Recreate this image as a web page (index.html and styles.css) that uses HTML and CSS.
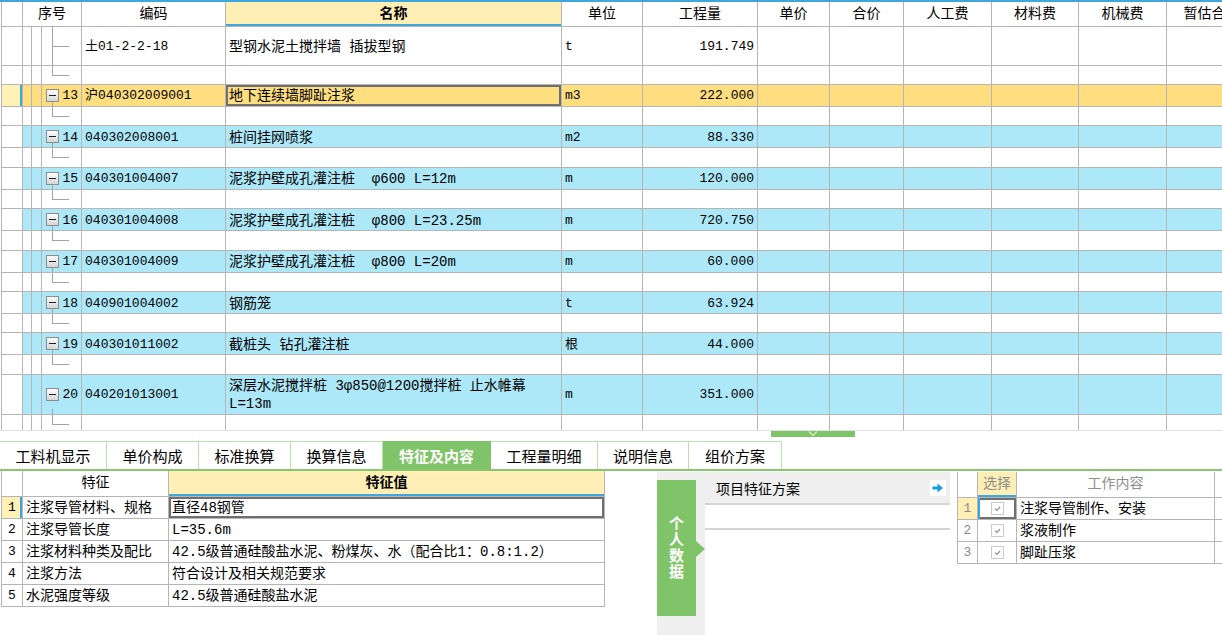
FILE: index.html
```html
<!DOCTYPE html>
<html lang="zh-CN">
<head>
    <meta charset="UTF-8">
    <title>分部分项</title>
    <link rel="stylesheet" href="styles.css">
</head>
<body>
    <div class="grid-wrap">
        <table class="grid">
            <colgroup>
                <col style="width:21px"><col style="width:9px"><col style="width:10px"><col style="width:40px">
                <col style="width:144px"><col style="width:336px"><col style="width:81px"><col style="width:115px">
                <col style="width:72px"><col style="width:74px"><col style="width:88px"><col style="width:87px">
                <col style="width:88px"><col style="width:90px">
            </colgroup>
            <tr class="head">
                <th></th><th colspan="3">序号</th><th>编码</th><th class="hl">名称</th><th>单位</th><th>工程量</th>
                <th>单价</th><th>合价</th><th>人工费</th><th>材料费</th><th>机械费</th><th>暂估合价</th>
            </tr>
            <tr class="leaf-row">
                <td class="sel"></td><td></td><td></td><td class="no leaf"></td>
                <td class="code">土01-2-2-18</td><td class="name">型钢水泥土搅拌墙 插拔型钢</td><td class="unit">t</td><td class="qty">191.749</td>
                <td></td><td></td><td></td><td></td><td></td><td></td>
            </tr>
            <tr class="gap"><td class="sel"></td><td></td><td></td><td class="no"></td><td></td><td></td><td></td><td></td><td></td><td></td><td></td><td></td><td></td><td></td></tr>

            <tr class="item cur">
                <td class="sel"></td><td></td><td></td><td class="no"><div class="nob"><span class="fold"></span>13</div></td>
                <td class="code">沪040302009001</td><td class="name focus">地下连续墙脚趾注浆</td><td class="unit">m3</td><td class="qty">222.000</td>
                <td></td><td></td><td></td><td></td><td></td><td></td>
            </tr>
            <tr class="gap"><td class="sel"></td><td></td><td></td><td class="no"></td><td></td><td></td><td></td><td></td><td></td><td></td><td></td><td></td><td></td><td></td></tr>

            <tr class="item blue">
                <td class="sel"></td><td></td><td></td><td class="no"><div class="nob"><span class="fold"></span>14</div></td>
                <td class="code">040302008001</td><td class="name">桩间挂网喷浆</td><td class="unit">m2</td><td class="qty">88.330</td>
                <td></td><td></td><td></td><td></td><td></td><td></td>
            </tr>
            <tr class="gap"><td class="sel"></td><td></td><td></td><td class="no"></td><td></td><td></td><td></td><td></td><td></td><td></td><td></td><td></td><td></td><td></td></tr>

            <tr class="item blue">
                <td class="sel"></td><td></td><td></td><td class="no"><div class="nob"><span class="fold"></span>15</div></td>
                <td class="code">040301004007</td><td class="name">泥浆护壁成孔灌注桩&nbsp;&nbsp;φ600 L=12m</td><td class="unit">m</td><td class="qty">120.000</td>
                <td></td><td></td><td></td><td></td><td></td><td></td>
            </tr>
            <tr class="gap"><td class="sel"></td><td></td><td></td><td class="no"></td><td></td><td></td><td></td><td></td><td></td><td></td><td></td><td></td><td></td><td></td></tr>

            <tr class="item blue">
                <td class="sel"></td><td></td><td></td><td class="no"><div class="nob"><span class="fold"></span>16</div></td>
                <td class="code">040301004008</td><td class="name">泥浆护壁成孔灌注桩&nbsp;&nbsp;φ800 L=23.25m</td><td class="unit">m</td><td class="qty">720.750</td>
                <td></td><td></td><td></td><td></td><td></td><td></td>
            </tr>
            <tr class="gap"><td class="sel"></td><td></td><td></td><td class="no"></td><td></td><td></td><td></td><td></td><td></td><td></td><td></td><td></td><td></td><td></td></tr>

            <tr class="item blue">
                <td class="sel"></td><td></td><td></td><td class="no"><div class="nob"><span class="fold"></span>17</div></td>
                <td class="code">040301004009</td><td class="name">泥浆护壁成孔灌注桩&nbsp;&nbsp;φ800 L=20m</td><td class="unit">m</td><td class="qty">60.000</td>
                <td></td><td></td><td></td><td></td><td></td><td></td>
            </tr>
            <tr class="gap"><td class="sel"></td><td></td><td></td><td class="no"></td><td></td><td></td><td></td><td></td><td></td><td></td><td></td><td></td><td></td><td></td></tr>

            <tr class="item blue">
                <td class="sel"></td><td></td><td></td><td class="no"><div class="nob"><span class="fold"></span>18</div></td>
                <td class="code">040901004002</td><td class="name">钢筋笼</td><td class="unit">t</td><td class="qty">63.924</td>
                <td></td><td></td><td></td><td></td><td></td><td></td>
            </tr>
            <tr class="gap"><td class="sel"></td><td></td><td></td><td class="no"></td><td></td><td></td><td></td><td></td><td></td><td></td><td></td><td></td><td></td><td></td></tr>

            <tr class="item blue">
                <td class="sel"></td><td></td><td></td><td class="no"><div class="nob"><span class="fold"></span>19</div></td>
                <td class="code">040301011002</td><td class="name">截桩头 钻孔灌注桩</td><td class="unit">根</td><td class="qty">44.000</td>
                <td></td><td></td><td></td><td></td><td></td><td></td>
            </tr>
            <tr class="gap"><td class="sel"></td><td></td><td></td><td class="no"></td><td></td><td></td><td></td><td></td><td></td><td></td><td></td><td></td><td></td><td></td></tr>

            <tr class="item blue tall">
                <td class="sel"></td><td></td><td></td><td class="no"><div class="nob"><span class="fold"></span>20</div></td>
                <td class="code">040201013001</td><td class="name">深层水泥搅拌桩 3φ850@1200搅拌桩 止水帷幕<br>L=13m</td><td class="unit">m</td><td class="qty">351.000</td>
                <td></td><td></td><td></td><td></td><td></td><td></td>
            </tr>
            <tr class="gap"><td class="sel"></td><td></td><td></td><td class="no"></td><td></td><td></td><td></td><td></td><td></td><td></td><td></td><td></td><td></td><td></td></tr>
        </table>
    </div>

    <div class="splitter">
        <div class="handle">
            <svg width="10" height="6" viewBox="0 0 10 6"><path d="M1 0.5l4 4 4-4" fill="none" stroke="#d4efc9" stroke-width="1.2"/></svg>
        </div>
    </div>

    <div class="tabs">
        <div class="tab" style="width:107px">工料机显示</div>
        <div class="tab" style="width:92px">单价构成</div>
        <div class="tab" style="width:92px">标准换算</div>
        <div class="tab" style="width:92px">换算信息</div>
        <div class="tab active" style="width:108px">特征及内容</div>
        <div class="tab" style="width:107px">工程量明细</div>
        <div class="tab" style="width:91px">说明信息</div>
        <div class="tab" style="width:93px">组价方案</div>
    </div>

    <div class="bottom">
        <div class="feat-area">
            <table class="feat">
                <colgroup>
                    <col style="width:21px"><col style="width:146px"><col style="width:436px">
                </colgroup>
                <tr>
                    <th></th><th>特征</th><th class="hl">特征值</th>
                </tr>
                <tr class="cur">
                    <td class="rn">1</td><td>注浆导管材料、规格</td><td class="focus">直径48钢管</td>
                </tr>
                <tr>
                    <td class="rn">2</td><td>注浆导管长度</td><td>L=35.6m</td>
                </tr>
                <tr>
                    <td class="rn">3</td><td>注浆材料种类及配比</td><td>42.5级普通硅酸盐水泥、粉煤灰、水（配合比1：0.8:1.2）</td>
                </tr>
                <tr>
                    <td class="rn">4</td><td>注浆方法</td><td>符合设计及相关规范要求</td>
                </tr>
                <tr>
                    <td class="rn">5</td><td>水泥强度等级</td><td>42.5级普通硅酸盐水泥</td>
                </tr>
            </table>
        </div>

        <div class="mid">
            <div class="side">
                <div class="vtab">个人数据</div>
                <div class="tri"></div>
            </div>
            <div class="plan">
                <div class="plan-head">
                    <span>项目特征方案</span>
                    <svg class="go" width="16" height="16" viewBox="0 0 16 16"><rect width="16" height="16" fill="#fff"/><path d="M2.5 6.5h5V3.5L13 8l-5.5 4.5v-3h-5z" fill="#1a9ed9"/></svg>
                </div>
                <div class="plan-row"></div>
            </div>
        </div>

        <table class="work">
            <colgroup>
                <col style="width:20px"><col style="width:39px"><col style="width:198px"><col style="width:40px">
            </colgroup>
            <tr>
                <th></th><th class="hl">选择</th><th>工作内容</th><th></th>
            </tr>
            <tr class="cur">
                <td class="rn">1</td>
                <td class="chk focus"><svg width="13" height="13" viewBox="0 0 13 13"><rect x="0.5" y="0.5" width="12" height="12" fill="#fff" stroke="#cbcbcb"/><path d="M4 6.6l1.9 1.8 3.2-3.4" fill="none" stroke="#8c8c8c" stroke-width="1.1"/></svg></td>
                <td>注浆导管制作、安装</td><td></td>
            </tr>
            <tr>
                <td class="rn">2</td>
                <td class="chk"><svg width="13" height="13" viewBox="0 0 13 13"><rect x="0.5" y="0.5" width="12" height="12" fill="#fff" stroke="#cbcbcb"/><path d="M4 6.6l1.9 1.8 3.2-3.4" fill="none" stroke="#8c8c8c" stroke-width="1.1"/></svg></td>
                <td>浆液制作</td><td></td>
            </tr>
            <tr>
                <td class="rn">3</td>
                <td class="chk"><svg width="13" height="13" viewBox="0 0 13 13"><rect x="0.5" y="0.5" width="12" height="12" fill="#fff" stroke="#cbcbcb"/><path d="M4 6.6l1.9 1.8 3.2-3.4" fill="none" stroke="#8c8c8c" stroke-width="1.1"/></svg></td>
                <td>脚趾压浆</td><td></td>
            </tr>
        </table>
    </div>
</body>
</html>
```

FILE: styles.css
```css
* {
    box-sizing: border-box;
}
body {
    margin: 0;
    width: 1222px;
    height: 635px;
    overflow: hidden;
    background-color: #fff;
    font-family: "Liberation Mono", "Noto Sans CJK SC", monospace;
    font-size: 13px;
    color: #000;
}

/* top grid */
.grid-wrap {
    height: 431px;
    overflow: hidden;
    border-top: 2px solid #3ea7dd;
    border-bottom: 1px solid #e2e2e2;
    padding-left: 1px;
}
.grid {
    border-collapse: collapse;
    table-layout: fixed;
    width: 1255px;
}
.grid th,
.grid td {
    border: 1px solid #b5b5b5;
    padding: 0 3px;
    white-space: nowrap;
    overflow: hidden;
    line-height: 18px;
}
.grid th {
    border-top: 0;
    height: 24px;
    font-size: 14px;
    font-weight: normal;
}
.grid th.hl,
.feat th.hl,
.work th.hl {
    background-color: #ffefb5;
    font-weight: bold;
    box-shadow: inset 0 -2px #3ea7dd;
}
.grid td.sel {
    padding: 0;
}
.grid td.no {
    padding: 0 3px 0 4px;
}
.grid .leaf-row td {
    height: 39px;
    padding-top: 3px;
}
.grid .gap td {
    height: 19.43px;
}
.grid .item td {
    height: 22px;
    padding-top: 2px;
}
.grid .item.tall td {
    height: 40px;
}
.grid .code,
.grid .unit,
.grid .qty {
    font-size: 13px;
}
.grid .name {
    font-size: 14px;
}
.grid .qty {
    text-align: right;
}
.grid .cur td {
    background-color: #ffde80;
}
.grid .blue td {
    background-color: #ade8f8;
}
.grid .cur td.sel {
    background-color: #fff0b5;
    box-shadow: inset -2px 0 #3aa6dc;
}
.grid .blue td.sel {
    background-color: #fff;
}
.focus {
    box-shadow: inset 0 0 0 2px #6f6f6f;
}

/* tree connectors */
.grid .gap td.no {
    background:
        linear-gradient(#a3a3a3, #a3a3a3) 10px 0 / 1px 9px no-repeat,
        linear-gradient(#a3a3a3, #a3a3a3) 10px 9px / 17px 1px no-repeat;
}
.grid td.leaf {
    background:
        linear-gradient(#a3a3a3, #a3a3a3) 10px 0 / 1px 100% no-repeat,
        linear-gradient(#a3a3a3, #a3a3a3) 10px 19px / 17px 1px no-repeat;
}
.grid .item td.no {
    background-image: linear-gradient(#a3a3a3, #a3a3a3);
    background-position: 10px 100%;
    background-size: 1px 5px;
    background-repeat: no-repeat;
}
.grid .item td.no .fold {
    margin-top: -2px;
}
.nob {
    display: flex;
    align-items: center;
    justify-content: space-between;
}
.fold {
    width: 13px;
    height: 13px;
    border: 1px solid #8d8d8d;
    background:
        linear-gradient(#1e1e1e, #1e1e1e) center / 7px 1px no-repeat,
        linear-gradient(#fdfdfd, #d6d6d6);
}

/* splitter + tabs */
.splitter {
    height: 10px;
}
.handle {
    margin-left: 771px;
    width: 84px;
    height: 6px;
    background-color: #80c469;
    display: flex;
    justify-content: center;
}
.tabs {
    display: flex;
    height: 30px;
    border-bottom: 2px solid #85c66f;
}
.tab {
    height: 28px;
    border-top: 1px solid #b9e3aa;
    border-right: 1px solid #b9e3aa;
    font-family: "Noto Sans CJK SC", sans-serif;
    font-size: 15px;
    line-height: 27px;
    text-align: center;
}
.tab.active {
    background-color: #80c469;
    border-color: #80c469;
    color: #fff;
    font-weight: bold;
}

/* bottom panels */
.bottom {
    display: flex;
    height: 164px;
}
.feat-area {
    width: 657px;
    flex: none;
    padding-left: 1px;
}
.feat,
.work {
    border-collapse: collapse;
    table-layout: fixed;
}
.feat {
    width: 603px;
}
.feat th,
.feat td,
.work th,
.work td {
    border: 1px solid #b5b5b5;
    padding: 0 3px;
    white-space: nowrap;
    overflow: hidden;
    font-size: 14px;
    line-height: 18px;
    height: 22px;
}
.feat td,
.work td {
    padding-top: 2px;
}
.feat th,
.work th {
    border-top: 0;
    height: 25px;
    font-weight: normal;
}
.feat td.rn,
.work td.rn {
    padding: 2px 0 0;
    text-align: center;
    font-size: 13px;
}
.feat .cur td.rn,
.work .cur td.rn {
    background-color: #fff0b5;
}
.feat .cur td.rn {
    box-shadow: inset -2px 0 #3aa6dc;
}

.mid {
    width: 293px;
    flex: none;
    display: flex;
    margin-top: 1px;
}
.side {
    width: 48px;
    background-color: #efefef;
    padding-top: 8px;
    display: flex;
    align-items: flex-start;
}
.vtab {
    width: 39px;
    height: 136px;
    background-color: #80c469;
    color: #fff;
    font-family: "Noto Sans CJK SC", sans-serif;
    font-size: 15px;
    font-weight: bold;
    writing-mode: vertical-rl;
    text-orientation: upright;
    text-align: center;
    line-height: 39px;
    letter-spacing: 1px;
}
.tri {
    margin-top: 61px;
    border-left: 9px solid #80c469;
    border-top: 8px solid transparent;
    border-bottom: 8px solid transparent;
}
.plan {
    flex: 1;
}
.plan-head {
    height: 33px;
    background-color: #efefef;
    border-bottom: 2px solid #d5d5d5;
    display: flex;
    align-items: center;
    justify-content: space-between;
    padding: 0 4px 0 11px;
    font-family: "Noto Sans CJK SC", sans-serif;
    font-size: 14px;
}
.plan-row {
    height: 25px;
    border-bottom: 2px solid #d5d5d5;
}

.work {
    flex: none;
    width: 297px;
    margin-left: 7px;
    margin-top: 1px;
    align-self: flex-start;
}
.work th {
    color: #8e8e8e;
}
.work th.hl {
    font-weight: normal;
    color: #8e8e8e;
}
.work td.rn {
    color: #8a8a8a;
}
.work td.chk {
    padding: 0;
    text-align: center;
}
.work td.chk svg {
    display: block;
    margin: 0 auto;
}
.work td.chk.focus {
    box-shadow: inset 2px 0 #3aa6dc, inset 0 0 0 2px #6f6f6f;
}
```
